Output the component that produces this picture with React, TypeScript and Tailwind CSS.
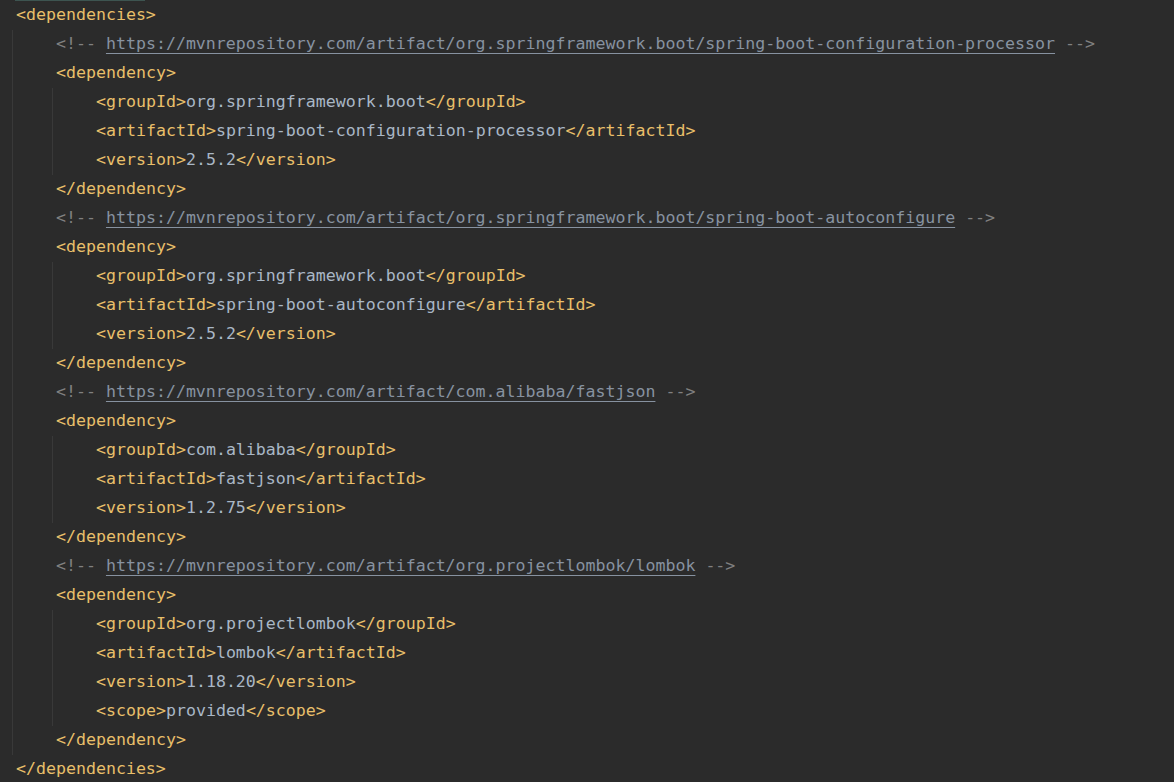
const TAG = "text-[#e8bf6a]";
const VAL = "text-[#a9b7c6]";

type Dep = {
  url: string;
  group: string;
  artifact: string;
  version: string;
  scope?: string;
};

const deps: Dep[] = [
  {
    url: "https://mvnrepository.com/artifact/org.springframework.boot/spring-boot-configuration-processor",
    group: "org.springframework.boot",
    artifact: "spring-boot-configuration-processor",
    version: "2.5.2",
  },
  {
    url: "https://mvnrepository.com/artifact/org.springframework.boot/spring-boot-autoconfigure",
    group: "org.springframework.boot",
    artifact: "spring-boot-autoconfigure",
    version: "2.5.2",
  },
  {
    url: "https://mvnrepository.com/artifact/com.alibaba/fastjson",
    group: "com.alibaba",
    artifact: "fastjson",
    version: "1.2.75",
  },
  {
    url: "https://mvnrepository.com/artifact/org.projectlombok/lombok",
    group: "org.projectlombok",
    artifact: "lombok",
    version: "1.18.20",
    scope: "provided",
  },
];

function Line({ children, className = "" }: { children: React.ReactNode; className?: string }) {
  return <div className={`flex h-[29px] items-center whitespace-pre ${className}`}>{children}</div>;
}

function Element({ name, value }: { name: string; value: string }) {
  return (
    <Line>
      <span className={TAG}>{`<${name}>`}</span>
      <span className={VAL}>{value}</span>
      <span className={TAG}>{`</${name}>`}</span>
    </Line>
  );
}

export default function App() {
  return (
    <div
      className="h-[782px] w-[1174px] overflow-hidden bg-[#2b2b2b] text-[16.6px] leading-none"
      style={{ fontFamily: '"DejaVu Sans Mono", "Liberation Mono", monospace' }}
    >
      <div className="ml-[15px] h-px w-[130px] bg-[#3d5450]" />
      <Line className="pl-[16px]">
        <span className={TAG}>{"<dependencies>"}</span>
      </Line>

      {/* children of <dependencies>, with the indent guide */}
      <div className="ml-[12px] border-l border-[#393939]">
        {deps.map((d) => (
          <div key={d.url}>
            <Line className="pl-[43px] text-[#808080]">
              <span>{"<!-- "}</span>
              <span className="text-[#8792a0] underline decoration-[#8792a0] underline-offset-[4px]">
                {d.url}
              </span>
              <span>{" -->"}</span>
            </Line>
            <Line className="pl-[43px]">
              <span className={TAG}>{"<dependency>"}</span>
            </Line>
            <div className="ml-[39px] border-l border-[#393939] pl-[43px]">
              <Element name="groupId" value={d.group} />
              <Element name="artifactId" value={d.artifact} />
              <Element name="version" value={d.version} />
              {d.scope && <Element name="scope" value={d.scope} />}
            </div>
            <Line className="pl-[43px]">
              <span className={TAG}>{"</dependency>"}</span>
            </Line>
          </div>
        ))}
      </div>

      <Line className="pl-[16px]">
        <span className={TAG}>{"</dependencies>"}</span>
      </Line>
    </div>
  );
}
